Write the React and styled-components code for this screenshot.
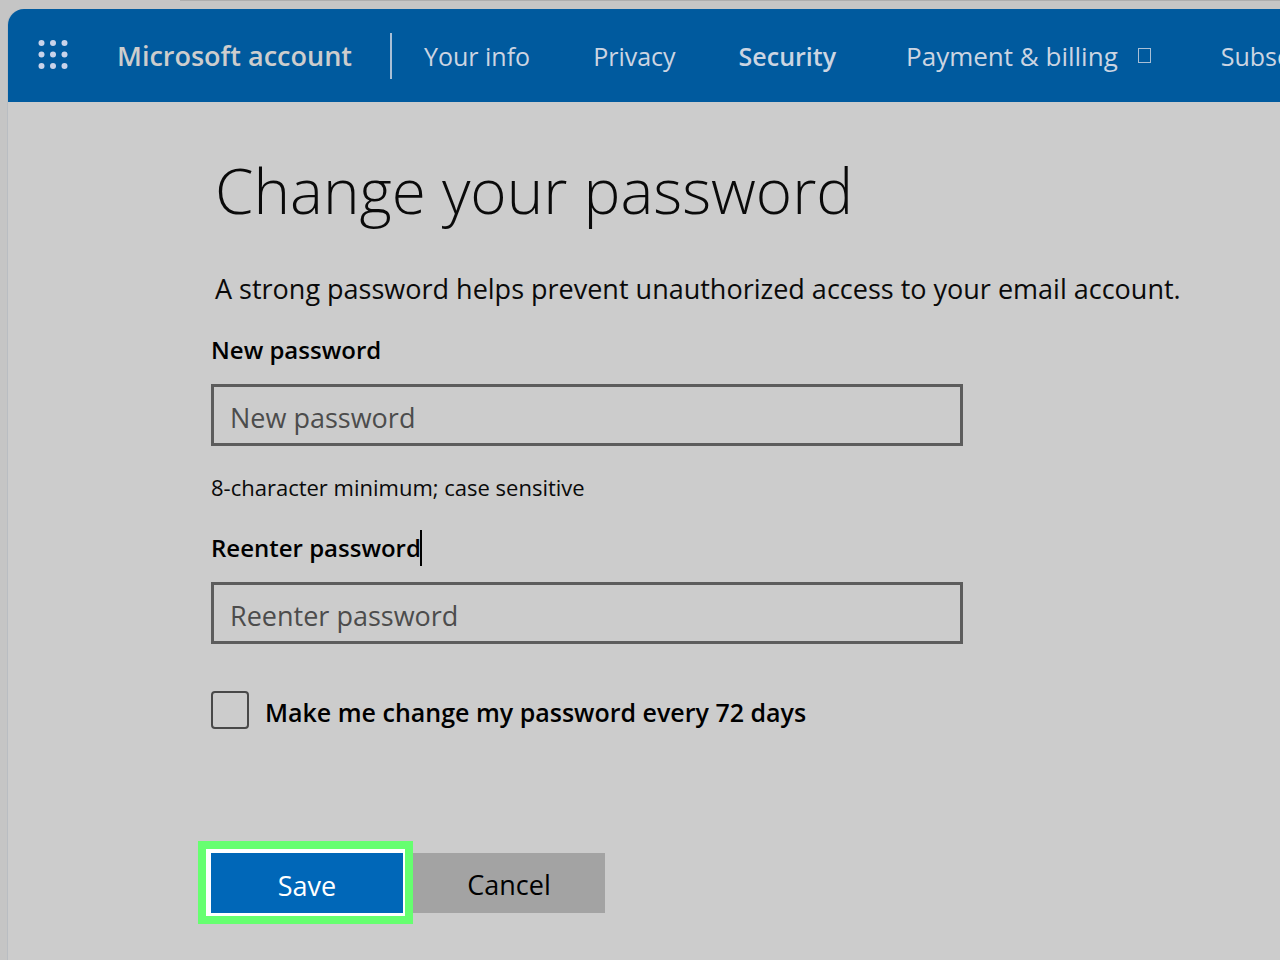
import React, { useState } from "react";
import styled, { createGlobalStyle } from "styled-components";

const GlobalStyle = createGlobalStyle`
  * {
    box-sizing: border-box;
  }
  body {
    margin: 0;
    background: #c5c5c5;
    color: #0a0a0a;
    font-family: "Open Sans", "Noto Sans", sans-serif;
    overflow: hidden;
  }
`;

const TabStrip = styled.div`
  height: 9px;
  margin-left: 180px;
  border-top: 1px solid #adadad;
`;

const Page = styled.div`
  min-height: calc(100vh - 9px);
  margin-left: 8px;
  background: #cccccc;
  border-top-left-radius: 16px;
  box-shadow: -1px 0 0 #b9bdc2;
  overflow: hidden;
`;

const Header = styled.header`
  display: flex;
  align-items: center;
  height: 93px;
  padding-left: 30px;
  background: #005a9e;
  color: #ccd5e2;
  white-space: nowrap;
`;

const AppsButton = styled.button`
  display: flex;
  padding: 0;
  border: 0;
  background: none;
  color: #c8d3ea;
`;

const Brand = styled.a`
  margin-left: 48px;
  padding-right: 38px;
  color: #cdcdcd;
  font-size: 27px;
  font-weight: 600;
  line-height: 46px;
  text-decoration: none;
`;

const Nav = styled.nav`
  display: flex;
  align-items: center;
  gap: 63px;
  height: 46px;
  padding-left: 32px;
  border-left: 2px solid #a9bfd6;
`;

const NavLink = styled.a`
  display: flex;
  align-items: center;
  gap: 20px;
  margin: 0 ${(props) => (props.$menu ? 7 : 0)}px;
  color: inherit;
  font-size: ${(props) => (props.$menu ? 26 : 25)}px;
  font-weight: ${(props) => (props.$active ? 600 : 400)};
  text-decoration: none;
`;

const MissingGlyph = styled.span`
  width: 13px;
  height: 15px;
  border: 1px solid #a9bfd6;
`;

const Form = styled.form`
  display: flex;
  flex-direction: column;
  align-items: flex-start;
  padding: 44px 32px 32px 203px;
`;

const Title = styled.h1`
  margin: 0 0 35px;
  padding-left: 4px;
  font-size: 62px;
  font-weight: 300;
  line-height: 88px;
`;

const Intro = styled.p`
  margin: 0 0 23px;
  padding-left: 4px;
  font-size: 27px;
  line-height: 40px;
  white-space: nowrap;
`;

const Label = styled.label`
  position: relative;
  margin-bottom: 16px;
  color: #000;
  font-size: 24px;
  font-weight: 600;
  line-height: 36px;
`;

const Caret = styled.span`
  position: absolute;
  top: 0;
  right: -1px;
  width: 2px;
  height: 36px;
  background: #000;
`;

const TextInput = styled.input`
  width: 100%;
  max-width: 752px;
  height: 62px;
  padding: 4px 16px 0;
  border: 3px solid #5c5c5c;
  border-radius: 0;
  background: transparent;
  color: #000;
  font: 400 27px "Open Sans", "Noto Sans", sans-serif;
  outline: 0;

  &::placeholder {
    color: #4c4c4c;
    opacity: 1;
  }
`;

const Hint = styled.p`
  margin: 25px 0 27px;
  font-size: 22px;
  line-height: 32px;
`;

const CheckRow = styled.div`
  display: flex;
  align-items: center;
  gap: 16px;
  margin-top: 46px;
`;

const Checkbox = styled.input`
  appearance: none;
  width: 38px;
  height: 38px;
  margin: 0;
  border: 2px solid #484848;
  border-radius: 4px;

  &:checked {
    background: #0067b8;
  }
`;

const CheckLabel = styled.label`
  padding-top: 4px;
  color: #000;
  font-size: 25px;
  font-weight: 600;
  line-height: 36px;
`;

const Actions = styled.div`
  display: flex;
  align-items: center;
  margin: 111px 0 0 -13px;
`;

const Highlight = styled.div`
  display: flex;
  padding: 4px 2px 3px 5px;
  border: 8px solid #66ff70;
  background: #fff;
`;

const Button = styled.button`
  width: 192px;
  height: 60px;
  padding: 4px 0 0;
  border: 0;
  background: ${(props) => (props.$primary ? "#0067b8" : "#a3a3a3")};
  color: ${(props) => (props.$primary ? "#fff" : "#000")};
  font: 400 27px "Open Sans", "Noto Sans", sans-serif;
`;

const AppsIcon = () => (
  <svg width="31" height="31" viewBox="0 0 31 31" fill="currentColor">
    {[3, 14.5, 26].map((y) =>
      [3.5, 15, 26.5].map((x) => (
        <circle key={`${x}-${y}`} cx={x} cy={y} r="3" />
      ))
    )}
  </svg>
);

const links = [
  { name: "Your info" },
  { name: "Privacy" },
  { name: "Security", active: true },
  { name: "Payment & billing", menu: true },
  { name: "Subscriptions" },
];

const App = () => {
  const [expires, setExpires] = useState(false);

  return (
    <>
      <GlobalStyle />
      <TabStrip />
      <Page>
        <Header>
          <AppsButton type="button" aria-label="All apps">
            <AppsIcon />
          </AppsButton>
          <Brand href="#">Microsoft account</Brand>
          <Nav>
            {links.map((link) => (
              <NavLink
                key={link.name}
                href="#"
                $active={link.active}
                $menu={link.menu}
              >
                {link.name}
                {link.menu && <MissingGlyph />}
              </NavLink>
            ))}
          </Nav>
        </Header>
        <Form onSubmit={(e) => e.preventDefault()}>
          <Title>Change your password</Title>
          <Intro>
            A strong password helps prevent unauthorized access to your email
            account.
          </Intro>
          <Label htmlFor="new-password">New password</Label>
          <TextInput
            id="new-password"
            type="password"
            placeholder="New password"
          />
          <Hint>8-character minimum; case sensitive</Hint>
          <Label htmlFor="reenter-password">
            Reenter password
            <Caret />
          </Label>
          <TextInput
            id="reenter-password"
            type="password"
            placeholder="Reenter password"
          />
          <CheckRow>
            <Checkbox
              id="expires"
              type="checkbox"
              checked={expires}
              onChange={(e) => setExpires(e.target.checked)}
            />
            <CheckLabel htmlFor="expires">
              Make me change my password every 72 days
            </CheckLabel>
          </CheckRow>
          <Actions>
            <Highlight>
              <Button type="submit" $primary>
                Save
              </Button>
            </Highlight>
            <Button type="button">Cancel</Button>
          </Actions>
        </Form>
      </Page>
    </>
  );
};

export default App;
